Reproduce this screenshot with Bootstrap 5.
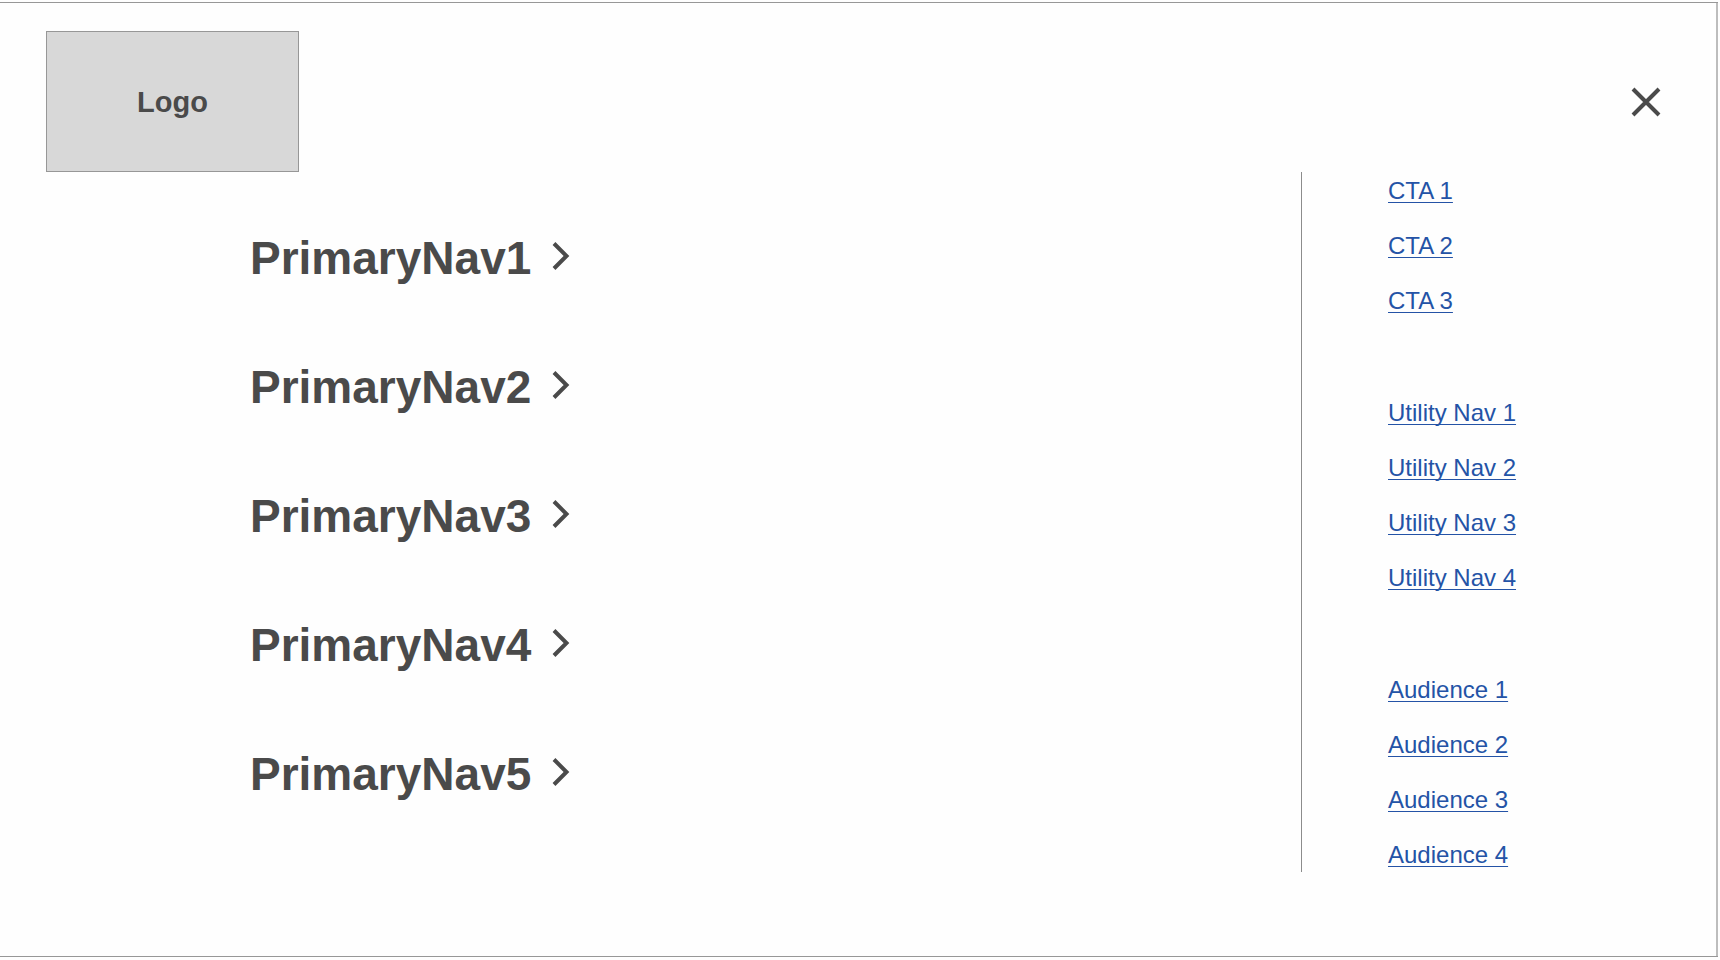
<!DOCTYPE html>
<html lang="en">
<head>
<meta charset="utf-8">
<meta name="viewport" content="width=device-width, initial-scale=1">
<title>Navigation menu</title>
<link href="https://cdn.jsdelivr.net/npm/bootstrap@5.3.0/dist/css/bootstrap.min.css" rel="stylesheet">
<style>
  body { font-family: "Liberation Sans", Arial, sans-serif; color: #4a4a4a; background: #fefefe; }
  .menu-screen {
    min-height: 100vh;
    padding: 2px 2px 3px 0;
  }
  .menu-frame {
    border: solid #979797;
    border-width: 1px 0;
    box-shadow: inset -2px 0 #bdbdbd;
  }
  .menu-header { padding: 28px 50px 0 46px; }
  .logo-box {
    width: 253px;
    height: 141px;
    background: #d8d8d8;
    border: 1px solid #979797;
    color: #4a4a4a;
    font-size: 29px;
    line-height: 36px;
  }
  .close-btn { width: 44px; height: 44px; color: #4a4a4a; }
  .menu-body { padding-bottom: 48px; }
  .primary-nav { padding: 62px 24px 24px 250px; gap: 81px; }
  .primary-nav a {
    gap: 20px;
    color: #4a4a4a;
    font-size: 46px;
    line-height: 48px;
  }
  .side-nav {
    flex: 0 0 417px;
    border-left: 1px solid #8c8c8c;
    padding: 5px 24px 3px 86px;
    gap: 84px;
  }
  .side-nav ul { gap: 27px; }
  .side-nav a {
    color: #2453a6;
    text-decoration-thickness: 1px;
    text-underline-offset: 3px;
    text-decoration-skip-ink: none;
  }
  .side-nav li { font-size: 24px; line-height: 28px; }
</style>
</head>
<body>
<div class="menu-screen d-flex flex-column">
  <div class="menu-frame flex-grow-1">
    <header class="menu-header d-flex justify-content-between align-items-center">
      <a href="#" class="logo-box d-flex align-items-center justify-content-center fw-bold text-decoration-none">Logo</a>
      <button type="button" class="close-btn btn p-0 border-0 d-flex align-items-center justify-content-center" aria-label="Close menu">
        <svg width="30" height="30" viewBox="0 0 30 30" fill="none" stroke="currentColor" stroke-width="4" aria-hidden="true"><path d="M2 2L28 28M28 2L2 28"/></svg>
      </button>
    </header>
    <main class="menu-body d-flex">
      <nav class="flex-grow-1" aria-label="Primary">
        <ul class="primary-nav list-unstyled d-flex flex-column align-items-start mb-0">
          <li><a href="#" class="d-flex align-items-center fw-bold text-decoration-none">PrimaryNav1 <svg width="20" height="32" viewBox="0 0 20 32" fill="none" stroke="currentColor" stroke-width="4" aria-hidden="true"><path d="M3 1.500L15.500 14L3 26.500"/></svg></a></li>
          <li><a href="#" class="d-flex align-items-center fw-bold text-decoration-none">PrimaryNav2 <svg width="20" height="32" viewBox="0 0 20 32" fill="none" stroke="currentColor" stroke-width="4" aria-hidden="true"><path d="M3 1.500L15.500 14L3 26.500"/></svg></a></li>
          <li><a href="#" class="d-flex align-items-center fw-bold text-decoration-none">PrimaryNav3 <svg width="20" height="32" viewBox="0 0 20 32" fill="none" stroke="currentColor" stroke-width="4" aria-hidden="true"><path d="M3 1.500L15.500 14L3 26.500"/></svg></a></li>
          <li><a href="#" class="d-flex align-items-center fw-bold text-decoration-none">PrimaryNav4 <svg width="20" height="32" viewBox="0 0 20 32" fill="none" stroke="currentColor" stroke-width="4" aria-hidden="true"><path d="M3 1.500L15.500 14L3 26.500"/></svg></a></li>
          <li><a href="#" class="d-flex align-items-center fw-bold text-decoration-none">PrimaryNav5 <svg width="20" height="32" viewBox="0 0 20 32" fill="none" stroke="currentColor" stroke-width="4" aria-hidden="true"><path d="M3 1.500L15.500 14L3 26.500"/></svg></a></li>
        </ul>
      </nav>
      <nav class="side-nav d-flex flex-column" aria-label="Secondary">
        <ul class="list-unstyled d-flex flex-column mb-0">
          <li><a href="#">CTA 1</a></li>
          <li><a href="#">CTA 2</a></li>
          <li><a href="#">CTA 3</a></li>
        </ul>
        <ul class="list-unstyled d-flex flex-column mb-0">
          <li><a href="#">Utility Nav 1</a></li>
          <li><a href="#">Utility Nav 2</a></li>
          <li><a href="#">Utility Nav 3</a></li>
          <li><a href="#">Utility Nav 4</a></li>
        </ul>
        <ul class="list-unstyled d-flex flex-column mb-0">
          <li><a href="#">Audience 1</a></li>
          <li><a href="#">Audience 2</a></li>
          <li><a href="#">Audience 3</a></li>
          <li><a href="#">Audience 4</a></li>
        </ul>
      </nav>
    </main>
  </div>
</div>
<script src="https://cdn.jsdelivr.net/npm/bootstrap@5.3.0/dist/js/bootstrap.bundle.min.js"></script>
</body>
</html>
